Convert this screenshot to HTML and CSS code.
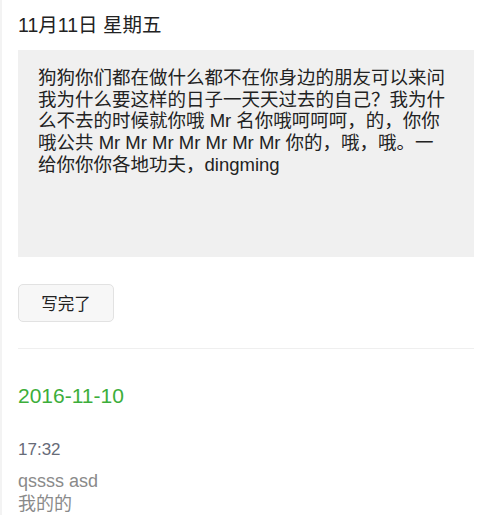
FILE: index.html
```html
<html lang="zh-CN">
<head>
    <meta charset="UTF-8">
    <meta name="viewport" content="width=device-width, initial-scale=1.0">
    <title>日记</title>
    <link rel="stylesheet" href="styles.css">
</head>
<body>
    <div class="page">
        <!-- Today -->
        <h2 class="day-title">11月11日 星期五</h2>
        <div class="note-box">
            狗狗你们都在做什么都不在你身边的朋友可以来问<br>
            我为什么要这样的日子一天天过去的自己？我为什<br>
            么不去的时候就你哦 Mr 名你哦呵呵呵，的，你你<br>
            哦公共 Mr Mr Mr Mr Mr Mr Mr 你的，哦，哦。一<br>
            给你你你各地功夫，dingming
        </div>
        <button class="done-btn">写完了</button>

        <hr class="divider">

        <!-- History -->
        <div class="history">
            <div class="history-date">2016-11-10</div>
            <div class="entry">
                <div class="entry-time">17:32</div>
                <div class="entry-text">qssss asd<br>我的的</div>
            </div>
        </div>
    </div>
</body>
</html>
```

FILE: styles.css
```css
/* General Styling */
body {
    margin: 0;
    background-color: #fff;
    color: #222;
    font-family: "Liberation Sans", "Noto Sans CJK SC", sans-serif;
    border-left: 2px solid #f3f3f3;
    height: 515px;
    box-sizing: border-box;
    overflow: hidden;
}

.page {
    padding: 12px 17px 0 16px;
}

.day-title {
    margin: 0;
    font-size: 19.5px;
    font-weight: normal;
    line-height: 26px;
    color: #222;
}

/* Note editor */
.note-box {
    margin-top: 12px;
    height: 207px;
    box-sizing: border-box;
    padding: 17px 10px 0 20px;
    background-color: #f0f0f0;
    font-size: 18.5px;
    line-height: 21.7px;
    white-space: nowrap;
    color: #222;
}

.done-btn {
    margin-top: 27px;
    width: 96px;
    height: 38px;
    border: 1px solid #e2e2e2;
    border-radius: 5px;
    background-color: #f7f7f7;
    color: #222;
    font-family: inherit;
    font-size: 16.5px;
    cursor: pointer;
}

.divider {
    margin: 26px 0 0;
    border: none;
    border-top: 1px solid #efefef;
}

/* History list */
.history-date {
    margin-top: 32px;
    font-size: 21px;
    line-height: 30px;
    color: #3cae3a;
}

.entry-time {
    margin-top: 27px;
    font-size: 17px;
    line-height: 24px;
    color: #676b78;
}

.entry-text {
    margin-top: 8px;
    font-size: 18px;
    line-height: 23px;
    color: #8a8a8a;
}
```
